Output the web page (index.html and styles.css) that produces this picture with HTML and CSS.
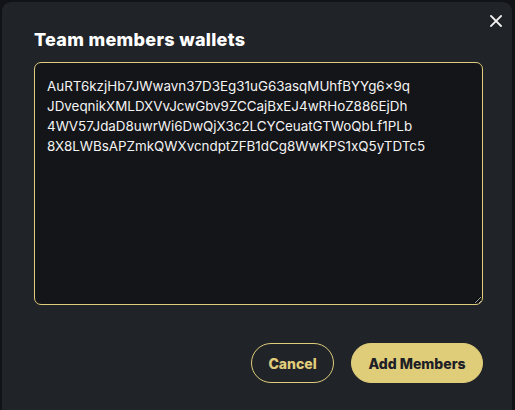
FILE: index.html
```html
<!DOCTYPE html>
<html lang="en">
<head>
<meta charset="utf-8">
<title>Team members wallets</title>
<link rel="stylesheet" href="styles.css">
</head>
<body>
<div class="backdrop">
  <div class="modal">
    <button class="close" aria-label="Close">
      <svg width="12" height="12" viewBox="0 0 12 12"><path d="M1 1L11 11M11 1L1 11" stroke="#f2f2f2" stroke-width="1.8" stroke-linecap="square"/></svg>
    </button>
    <h2 class="title">Team members wallets</h2>
    <textarea class="wallets" spellcheck="false">AuRT6kzjHb7JWwavn37D3Eg31uG63asqMUhfBYYg6×9q
JDveqnikXMLDXVvJcwGbv9ZCCajBxEJ4wRHoZ886EjDh
4WV57JdaD8uwrWi6DwQjX3c2LCYCeuatGTWoQbLf1PLb
8X8LWBsAPZmkQWXvcndptZFB1dCg8WwKPS1xQ5yTDTc5</textarea>
    <div class="actions">
      <button class="btn btn-outline">Cancel</button>
      <button class="btn btn-primary">Add Members</button>
    </div>
  </div>
</div>
</body>
</html>
```
FILE: styles.css
```css
* { box-sizing: border-box; }
html, body {
  margin: 0;
  padding: 0;
  background: #111316;
  height: 100%;
  overflow: hidden;
  font-family: Inter, "Noto Sans", sans-serif;
  color-scheme: dark;
}
.backdrop {
  padding: 2px 2px 0 2px;
  height: 100%;
}
.modal {
  position: relative;
  background: #202328;
  border-radius: 9px 9px 0 0;
  width: 510px;
  height: 420px;
  padding: 26px 29px 0 32px;
}
.close {
  position: absolute;
  top: 10px;
  right: 7px;
  width: 18px;
  height: 18px;
  padding: 0;
  border: 0;
  background: transparent;
  display: flex;
  align-items: center;
  justify-content: center;
}
.title {
  margin: 0;
  font-size: 18px;
  line-height: 24px;
  font-weight: 800;
  letter-spacing: 0.3px;
  color: #ffffff;
}
.wallets {
  display: block;
  margin-top: 10px;
  width: 449px;
  height: 243px;
  background: #141518;
  border: 1px solid #e0cd7b;
  border-radius: 7px;
  padding: 13px 12px;
  font-family: Inter, "Noto Sans", sans-serif;
  font-size: 13.4px;
  line-height: 20px;
  color: #f4f4f4;
  outline: none;
  resize: vertical;
}
.actions {
  display: flex;
  justify-content: flex-end;
  gap: 17px;
  margin-top: 38px;
  width: 449px;
}
.btn {
  height: 40px;
  border-radius: 20px;
  font-family: Inter, "Noto Sans", sans-serif;
  font-size: 14px;
  font-weight: 800;
  padding: 0 10px;
  cursor: pointer;
}
.btn-outline {
  background: transparent;
  border: 1px solid #e0cd7b;
  color: #e0cd7b;
  width: 83px;
}
.btn-primary {
  background: #dfcd7a;
  border: 1px solid #dfcd7a;
  color: #1d2026;
  width: 132px;
}
```
